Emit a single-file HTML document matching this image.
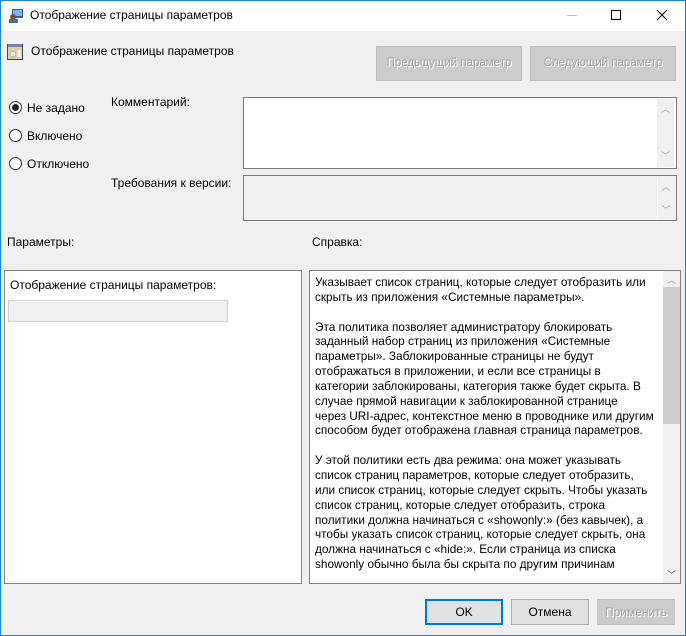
<!DOCTYPE html>
<html><head><meta charset="utf-8"><style>
*{margin:0;padding:0;box-sizing:border-box}
body{width:686px;height:636px;background:#f0f0f0;font-family:"Liberation Sans","DejaVu Sans",sans-serif;font-size:12px;color:#000;position:relative;overflow:hidden}
.a{position:absolute;white-space:nowrap}
.win{position:absolute;left:0;top:0;width:686px;height:636px;border:1px solid #1883d7;border-top-color:#1883d7}
.title{position:absolute;left:1px;top:1px;width:684px;height:30px;background:#fff}
.btnd{position:absolute;background:#cccccc;border:1px solid #bfbfbf;color:#a3a3a3;text-shadow:1px 1px 0 #fff;text-align:center;font-size:11.5px}
.btn{position:absolute;background:#e1e1e1;border:1px solid #adadad;text-align:center;font-size:12px}
.radio{position:absolute;width:13px;height:13px;border:1px solid #333;border-radius:50%;background:#fff}
.sb{position:absolute;background:#f0f0f0;color:#a0a0a0;font-size:9px;text-align:center}
.help{position:absolute;left:315px;top:275px;line-height:14.85px;font-size:11.8px;white-space:pre;color:#000}
</style></head><body>
<div class="win"></div>
<div class="title"></div>
<svg class="a" style="left:8px;top:8px" width="16" height="16"><rect x="4" y="1" width="11" height="9" fill="#2a5fae"/><rect x="5" y="2" width="9" height="6" fill="#7fb4ea"/><circle cx="5" cy="9" r="3" fill="#6b5240"/><rect x="1" y="11" width="9" height="4" fill="#3c6ea8"/></svg>
<div class="a" style="left:30px;top:8px;font-size:12px">Отображение страницы параметров</div>
<div class="a" style="left:567px;top:15px;width:10px;height:1px;background:#bbb"></div>
<div class="a" style="left:611px;top:10px;width:10px;height:10px;border:1px solid #000"></div>
<svg class="a" style="left:656px;top:9px" width="12" height="12"><path d="M1 1L11 11M11 1L1 11" stroke="#000" stroke-width="1"/></svg>

<svg class="a" style="left:7px;top:44px" width="16" height="16"><rect x="0" y="0" width="16" height="16" fill="#3a4560"/><rect x="1" y="3" width="14" height="12" fill="#d9cfae"/><rect x="1" y="0" width="14" height="3" fill="#7a7fa8"/><circle cx="6" cy="10" r="3" fill="#e8e8e0" stroke="#888" stroke-width=".5"/><rect x="10" y="6" width="4" height="7" fill="#f4f0d8"/></svg>
<div class="a" style="left:31px;top:44px">Отображение страницы параметров</div>

<div class="btnd" style="left:376px;top:46px;width:146px;height:35px;line-height:33px">Предыдущий параметр</div>
<div class="btnd" style="left:530px;top:46px;width:146px;height:35px;line-height:33px">Следующий параметр</div>

<div class="radio" style="left:9px;top:101px"></div><div class="a" style="left:12px;top:104px;width:7px;height:7px;border-radius:50%;background:#222"></div>
<div class="a" style="left:27px;top:101px">Не задано</div>
<div class="radio" style="left:9px;top:129px"></div><div class="a" style="left:27px;top:129px">Включено</div>
<div class="radio" style="left:9px;top:157px"></div><div class="a" style="left:27px;top:157px">Отключено</div>

<div class="a" style="left:111px;top:95px">Комментарий:</div>
<div class="a" style="left:243px;top:97px;width:434px;height:72px;background:#fff;border:1px solid #7a7a7a"></div>
<div class="sb" style="left:657px;top:99px;width:17px;height:68px"><div style="margin-top:3px">︿</div><div style="margin-top:34px">﹀</div></div>
<div class="a" style="left:111px;top:176px">Требования к версии:</div>
<div class="a" style="left:243px;top:175px;width:434px;height:46px;background:#f0f0f0;border:1px solid #7a7a7a"></div>
<div class="sb" style="left:657px;top:177px;width:17px;height:42px;border-left:1px solid #fff"><div style="margin-top:3px">︿</div><div style="margin-top:10px">﹀</div></div>

<div class="a" style="left:7px;top:235px">Параметры:</div>
<div class="a" style="left:312px;top:235px">Справка:</div>

<div class="a" style="left:4px;top:270px;width:298px;height:314px;background:#fff;border:1px solid #828282"></div>
<div class="a" style="left:10px;top:278px">Отображение страницы параметров:</div>
<div class="a" style="left:8px;top:300px;width:220px;height:22px;background:#f0f0f0;border:1px solid #d0d0d0"></div>

<div class="a" style="left:309px;top:270px;width:372px;height:314px;background:#fff;border:1px solid #828282"></div>
<div class="sb" style="left:663px;top:271px;width:17px;height:312px"><div style="margin-top:2px">︿</div></div>
<div class="a" style="left:663px;top:287px;width:17px;height:137px;background:#cdcdcd"></div>
<div class="a" style="left:663px;top:568px;width:17px;height:14px;color:#606060;font-size:9px;text-align:center">﹀</div>
<div class="help">Указывает список страниц, которые следует отобразить или
скрыть из приложения «Системные параметры».

Эта политика позволяет администратору блокировать
заданный набор страниц из приложения «Системные
параметры». Заблокированные страницы не будут
отображаться в приложении, и если все страницы в
категории заблокированы, категория также будет скрыта. В
случае прямой навигации к заблокированной странице
через URI-адрес, контекстное меню в проводнике или другим
способом будет отображена главная страница параметров.

У этой политики есть два режима: она может указывать
список страниц параметров, которые следует отобразить,
или список страниц, которые следует скрыть. Чтобы указать
список страниц, которые следует отобразить, строка
политики должна начинаться с «showonly:» (без кавычек), а
чтобы указать список страниц, которые следует скрыть, она
должна начинаться с «hide:». Если страница из списка
showonly обычно была бы скрыта по другим причинам</div>

<div class="btn" style="left:425px;top:599px;width:78px;height:26px;line-height:22px;border:2px solid #0078d7">OK</div>
<div class="btn" style="left:511px;top:599px;width:78px;height:26px;line-height:24px">Отмена</div>
<div class="btnd" style="left:597px;top:599px;width:78px;height:26px;line-height:24px;font-size:12px">Применить</div>
</body></html>
